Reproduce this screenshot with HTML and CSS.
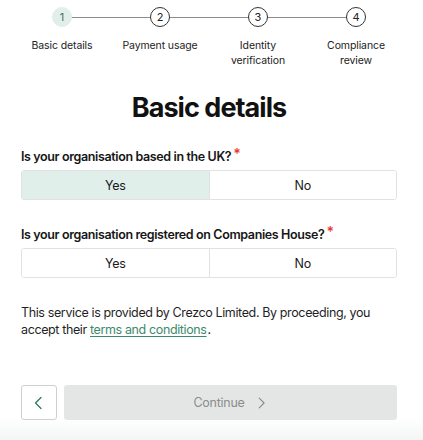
FILE: index.html
```html
<!DOCTYPE html>
<html lang="en">
<head>
    <meta charset="UTF-8">
    <meta name="viewport" content="width=device-width, initial-scale=1.0">
    <title>Basic details</title>
    <link rel="stylesheet" href="styles.css">
</head>
<body>
    <div class="page">
        <ol class="steps">
            <li class="step active">
                <span class="step-num">1</span>
                <span class="step-label">Basic details</span>
            </li>
            <li class="step">
                <span class="step-num">2</span>
                <span class="step-label">Payment usage</span>
            </li>
            <li class="step">
                <span class="step-num">3</span>
                <span class="step-label">Identity verification</span>
            </li>
            <li class="step">
                <span class="step-num">4</span>
                <span class="step-label">Compliance review</span>
            </li>
        </ol>

        <h1>Basic details</h1>

        <div class="question">
            <div class="question-label">Is your organisation based in the UK?<span class="required">*</span></div>
            <div class="toggle">
                <button class="selected">Yes</button>
                <button>No</button>
            </div>
        </div>

        <div class="question">
            <div class="question-label">Is your organisation registered on Companies House?<span class="required">*</span></div>
            <div class="toggle">
                <button>Yes</button>
                <button>No</button>
            </div>
        </div>

        <p class="notice">This service is provided by Crezco Limited. By proceeding, you accept their <a href="#">terms and conditions</a>.</p>
    </div>

    <div class="footer">
        <button class="back-button" aria-label="Back">
            <svg width="16" height="16" viewBox="0 0 16 16" fill="none" stroke="#2f7a62" stroke-width="1.3" stroke-linecap="round" stroke-linejoin="round"><path d="M10 2.5 L4.5 8 L10 13.5"/></svg>
        </button>
        <button class="continue-button" disabled>
            Continue
            <svg width="14" height="14" viewBox="0 0 16 16" fill="none" stroke="#8a8d8d" stroke-width="1.3" stroke-linecap="round" stroke-linejoin="round"><path d="M6 2.5 L11.5 8 L6 13.5"/></svg>
        </button>
    </div>
</body>
</html>
```

FILE: styles.css
```css
* {
    box-sizing: border-box;
}
body {
    font-family: Inter, "Noto Sans", sans-serif;
    margin: 0;
    color: #1a1a1a;
    background-color: #fff;
    letter-spacing: -0.02em;
}
.page {
    padding: 0 26px 0 21px;
}
.steps {
    list-style: none;
    display: grid;
    grid-template-columns: repeat(4, 98px);
    margin: 0 0 0 -8px;
    padding: 7px 0 0;
}
.step {
    position: relative;
    display: flex;
    flex-direction: column;
    align-items: center;
}
.step:not(:last-child)::after {
    content: "";
    position: absolute;
    top: 10px;
    left: 50%;
    width: 100%;
    height: 1px;
    background-color: #8c8c8c;
}
.step-num {
    position: relative;
    z-index: 1;
    width: 20px;
    height: 20px;
    border-radius: 50%;
    border: 1px solid #333;
    background-color: #fff;
    font-size: 11px;
    line-height: 18px;
    text-align: center;
    color: #222;
    letter-spacing: 0;
}
.step.active .step-num {
    border-color: #e1efeb;
    background-color: #e1efeb;
    color: #4d6b62;
}
.step-label {
    margin-top: 12px;
    padding: 0 8px;
    font-size: 10.5px;
    line-height: 14.5px;
    text-align: center;
    color: #222;
    letter-spacing: -0.01em;
}
h1 {
    margin: 22px 0 0;
    font-size: 27px;
    line-height: 36px;
    font-weight: 700;
    letter-spacing: -0.035em;
    text-align: center;
    color: #111;
}
.question {
    margin-top: 22px;
}
.question + .question {
    margin-top: 26px;
}
.question-label {
    font-size: 12.5px;
    font-weight: 600;
    line-height: 18px;
    letter-spacing: -0.03em;
    color: #161616;
}
.required {
    color: #e8392b;
    font-size: 14px;
    vertical-align: top;
    line-height: 12px;
    margin-left: 2px;
}
.toggle {
    display: flex;
    margin-top: 4px;
    border: 1px solid #e2e2e2;
    border-radius: 3px;
    overflow: hidden;
}
.toggle button {
    flex: 1;
    height: 28px;
    border: none;
    background-color: #fff;
    font-family: inherit;
    font-size: 12.5px;
    letter-spacing: -0.02em;
    color: #1a1a1a;
}
.toggle button + button {
    border-left: 1px solid #e2e2e2;
}
.toggle button.selected {
    background-color: #e1efeb;
}
.notice {
    margin: 26px 0 0;
    font-size: 12.5px;
    line-height: 17px;
    letter-spacing: -0.03em;
    color: #1f1f1f;
}
.notice a {
    color: #3b8a6c;
    text-decoration: underline;
    text-underline-offset: 2px;
    margin-right: 1px;
}
.footer {
    display: flex;
    gap: 7px;
    margin-top: 47px;
    padding: 0 26px 20px 21px;
    background: linear-gradient(to bottom, #fff 60%, #f4f5f5);
}
.back-button {
    width: 36px;
    height: 35px;
    border: 1px solid #cfcfcf;
    border-radius: 3px;
    background-color: #fff;
    display: flex;
    align-items: center;
    justify-content: center;
    padding: 0;
}
.continue-button {
    flex: 1;
    height: 35px;
    border: none;
    border-radius: 3px;
    background-color: #e4e6e6;
    font-family: inherit;
    font-size: 12.5px;
    letter-spacing: -0.02em;
    color: #8a8d8d;
    display: flex;
    align-items: center;
    justify-content: center;
    gap: 9px;
}
```
